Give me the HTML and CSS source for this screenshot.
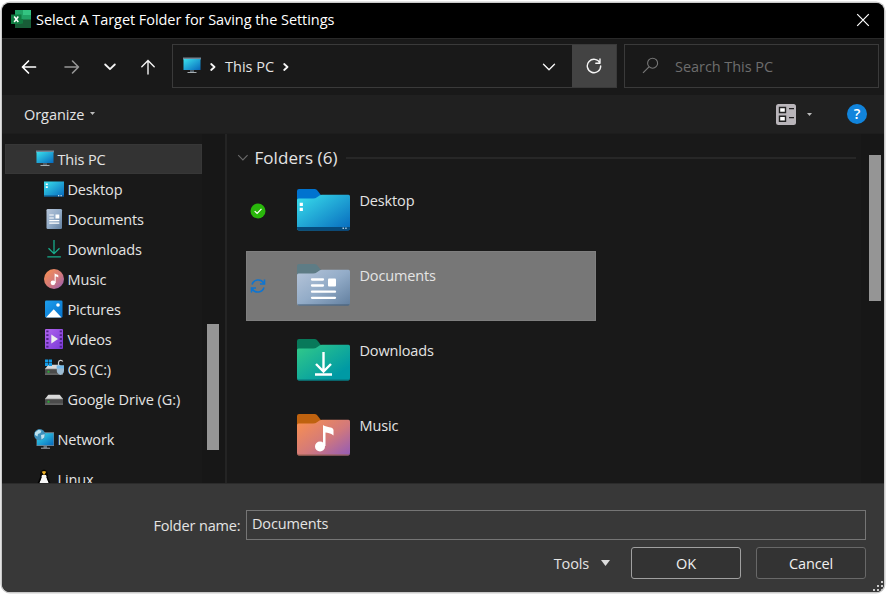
FILE: index.html
```html
<!DOCTYPE html>
<html lang="en">
<head>
<meta charset="utf-8">
<title>Select A Target Folder for Saving the Settings</title>
<link rel="stylesheet" href="styles.css">
</head>
<body>
<svg class="defs" width="0" height="0" aria-hidden="true">
  <defs>
    <linearGradient id="screen" x1="0" y1="0" x2="1" y2="1"><stop offset="0" stop-color="#3ae0ec"/><stop offset="1" stop-color="#0668bd"/></linearGradient>
    <linearGradient id="slate" x1="0" y1="0" x2="1" y2="1"><stop offset="0" stop-color="#b6c5d9"/><stop offset=".5" stop-color="#93acc8"/><stop offset="1" stop-color="#627f9f"/></linearGradient>
    <linearGradient id="green" x1="0" y1="0" x2="1" y2="1"><stop offset="0" stop-color="#33cb88"/><stop offset=".8" stop-color="#0099a4"/></linearGradient>
    <linearGradient id="music" x1="0" y1="0" x2="1" y2="1"><stop offset="0" stop-color="#fb914e"/><stop offset=".55" stop-color="#d2797b"/><stop offset="1" stop-color="#925bb9"/></linearGradient>
    <linearGradient id="violet" x1="0" y1="0" x2="1" y2="1"><stop offset="0" stop-color="#b164ed"/><stop offset="1" stop-color="#7939d8"/></linearGradient>
    <linearGradient id="sky" x1="0" y1="0" x2="1" y2="1"><stop offset="0" stop-color="#1e9eec"/><stop offset="1" stop-color="#0573ce"/></linearGradient>
    <symbol id="pc" viewBox="0 0 18 17"><path d="M0 .5h18v2H0z" fill="#728493"/><path d="M.5 2h17v11H.5z" fill="url(#screen)"/><path d="M7 13.200h4v1.700H7z" fill="#586670"/><path d="M4.500 15h9v1h-9z" fill="#a6adb2"/></symbol>
    <symbol id="drive" viewBox="0 0 18 11"><path d="M3.500 0h11L18 4.500H0z" fill="#d9d9d9"/><path d="M0 4.500h18V10H0z" fill="#4b4b4b"/><path d="M0 4.400h18M0 9.700h18" stroke="#999" stroke-width=".7"/><path d="M2.500 6.200h2v2h-2z" fill="#28a836"/></symbol>
  </defs>
</svg>
<div class="window">
  <header class="titlebar">
    <svg class="excel" width="20" height="18" viewBox="0 0 20 18"><path d="M4 0h16v18H4z" fill="#185c37"/><path d="M4 0h8v9H4z" fill="#21a366"/><path d="M12 0h8v5h-8z" fill="#33c481"/><path d="M12 5h8v4.500h-8z" fill="#21a366"/><path d="M4 9h8v4.500H4z" fill="#107c41"/><path d="M0 4.500h10.500v9.500H0z" fill="#107c41"/><path d="M3.200 6.500 7.300 12M7.300 6.500 3.200 12" stroke="#fff" stroke-width="1.500"/></svg>
    <span class="title">Select A Target Folder for Saving the Settings</span>
    <svg class="close" width="14" height="14" viewBox="0 0 14 14"><path d="m1.200 1.200 11.600 11.600M12.800 1.200 1.200 12.800" stroke="#fff" stroke-width="1.200"/></svg>
  </header>

  <nav class="nav">
    <div class="arrows">
      <svg width="16" height="16" viewBox="0 0 16 16"><path d="M14.500 8H1.500M7.500 2l-6 6 6 6" class="ln bright"/></svg>
      <svg width="16" height="16" viewBox="0 0 16 16"><path d="M1 8h13.500M8.500 2l6 6-6 6" class="ln dim"/></svg>
      <svg width="12" height="16" viewBox="2 0 12 16"><path d="m3.200 5.500 4.800 4.700 4.800-4.700" class="ln thick"/></svg>
      <svg width="16" height="16" viewBox="0 0 16 16"><path d="M8 15V1.500M1.800 7.800 8 1.500l6.200 6.300" class="ln"/></svg>
    </div>
    <div class="address">
      <svg class="apc" width="18" height="17"><use href="#pc"/></svg>
      <svg class="crumb" width="6" height="8" viewBox="0 0 6 8"><path d="m1.200 1 3.300 3-3.300 3" class="ln thick"/></svg>
      <span class="place">This PC</span>
      <svg class="crumb" width="6" height="8" viewBox="0 0 6 8"><path d="m1.200 1 3.300 3-3.300 3" class="ln thick"/></svg>
      <svg class="drop" width="14" height="8" viewBox="0 0 14 8"><path d="m1.500 1.300 5.500 5.500 5.500-5.500" class="ln"/></svg>
      <div class="refresh"><svg width="16" height="16" viewBox="0 0 16 16"><path d="M14 5A6.700 6.700 0 1 0 14.700 8M14 1v4.200H9.800" class="ln"/></svg></div>
    </div>
    <div class="search">
      <svg width="17" height="17" viewBox="0 0 17 17"><circle cx="10.600" cy="6.200" r="5" fill="none" stroke="#777" stroke-width="1.100"/><path d="m7 9.800-6 6" stroke="#777" stroke-width="1.200"/></svg>
      <span>Search This PC</span>
    </div>
  </nav>

  <div class="toolbar">
    <span class="organize">Organize</span>
    <svg class="tri" width="5" height="3" viewBox="0 0 5 3"><path d="M0 0h5L2.500 3z" fill="#bbb"/></svg>
    <svg class="view" width="20" height="21" viewBox="0 0 20 21"><rect width="20" height="21" rx="2.500" fill="#b9b5ba"/><path d="M3.500 3.500h6v5h-6zM3.500 12.300h6v5h-6z" fill="#fff" stroke="#222" stroke-width="1.400"/><path d="M13 4.700h5M13 13.700h5" stroke="#222" stroke-width="1.300"/></svg>
    <svg class="tri" width="5" height="3" viewBox="0 0 5 3"><path d="M0 0h5L2.500 3z" fill="#bbb"/></svg>
    <span class="help">?</span>
  </div>

  <main class="body">
    <aside class="side">
      <ul class="tree">
        <li class="sel"><svg width="18" height="17"><use href="#pc"/></svg><span>This PC</span></li>
        <li class="sub"><svg width="20" height="20" viewBox="0 0 20 20"><path d="M0 2.500h20v15H0z" fill="url(#screen)"/><path d="M0 16.500h20v1H0z" fill="#0a4a80"/><path d="M1.800 4.500h2v1.600h-2zM1.800 7.300h2v1.600h-2zM14 16.300h1.300v1H14zM16.500 16.300h1.300v1h-1.300z" fill="#fff"/></svg><span>Desktop</span></li>
        <li class="sub"><svg width="20" height="20" viewBox="0 0 20 20"><rect x="2.500" width="15.500" height="20" rx="1.300" fill="url(#slate)"/><path d="M5.300 6h4.500M5.300 9h4.500M5.300 11.700h10M5.300 14.200h10" stroke="#fff" stroke-width="1.200"/><path d="M11.500 5.500h3.800v4h-3.800z" fill="#fff"/></svg><span>Documents</span></li>
        <li class="sub"><svg width="20" height="20" viewBox="0 0 20 20"><path d="M10 1v13.500M4.500 9.300 10 14.700l5.500-5.400M3.300 17.800h13.600" fill="none" stroke="#17ac8c" stroke-width="1.300"/></svg><span>Downloads</span></li>
        <li class="sub"><svg width="20" height="20" viewBox="0 0 20 20"><circle cx="10" cy="10" r="10" fill="url(#music)"/><path d="M10.600 13.800V4.200c1 1.300 3.700 1.300 3.700 2v2.300c-1-.8-2.300-.8-2.600-1v6.400z" fill="#fff"/><circle cx="9" cy="13.800" r="2.400" fill="#fff"/></svg><span>Music</span></li>
        <li class="sub"><svg width="20" height="20" viewBox="0 0 20 20"><rect x="1" y="1.500" width="17.500" height="17" rx="1.300" fill="url(#sky)"/><path d="m2 18.500 7.700-8.200 7.800 8.200z" fill="#fff"/><circle cx="14" cy="6" r="1.800" fill="#fff"/></svg><span>Pictures</span></li>
        <li class="sub"><svg width="20" height="20" viewBox="0 0 20 20"><rect x="1" width="18" height="20" rx="1" fill="url(#violet)"/><path d="M3.400 1.500v18M16.800 1.500v18" stroke="#4d2185" stroke-width="2.200" stroke-dasharray="1.800 2"/><path d="m7.300 5.500 6.700 4.500-6.700 4.500z" fill="#eee"/></svg><span>Videos</span></li>
        <li class="sub"><svg width="20" height="20" viewBox="0 0 20 20"><use href="#drive" x="1" y="5.500" width="18" height="11"/><path d="M1 .5h3.200v3H1zM4.800.5H8v3H4.800zM1 4.100h3.200v3H1zM4.800 4.100H8v3H4.800z" fill="#149be6"/><path d="M14.500 7V3.300a2.300 2.300 0 0 1 4.300-.8" fill="none" stroke="#ccc" stroke-width="1.200"/><path d="M12.800 6.500H20v5.300q0 3-3.500 4.200-3.700-1.200-3.700-4.200z" fill="#9cbcd4"/><path d="M12.800 6.500H20v3h-7.200z" fill="#75bbea"/></svg><span>OS (C:)</span></li>
        <li class="sub"><svg width="20" height="20" viewBox="0 0 20 20"><use href="#drive" x="1" y="5.500" width="18" height="11"/></svg><span class="wide">Google Drive (G:)</span></li>
        <li class="net"><svg width="20" height="20" viewBox="0 0 20 20"><path d="M2.500 3.200H20V17H2.500z" fill="#728493"/><path d="M3 4.200h16.500v12H3z" fill="url(#screen)"/><path d="M9.500 17h3.500v2H9.500z" fill="#65717a"/><path d="M7 18.700h9v1H7z" fill="#a6adb2"/><circle cx="5.700" cy="5.700" r="5.600" fill="#3e91bc"/><path d="M1 3.500 4.500.8l3 1-1 2.200-2.500 1-.5 2.500L1 6zM7 6l3.700-.8-.5 3.300-2.700 2z" fill="#bce1ee"/></svg><span>Network</span></li>
        <li class="linux"><svg width="20" height="20" viewBox="0 0 20 20"><ellipse cx="10" cy="6.500" rx="4" ry="6" fill="#050505"/><path d="M8 6h4l1.200 4 2 5-2.500 4H7.200L5 15l2-5z" fill="#f7f7f7"/><path d="M7 8 4 15M13 8l3 7" stroke="#000" stroke-width="1.500"/><path d="m7.700 2.800 2.300-.8 2.300.8L10 6.300z" fill="#e9ae27"/></svg><span>Linux</span></li>
      </ul>
      <div class="track"><div class="thumb side-thumb"></div></div>
    </aside>
    <section class="files">
      <h2 class="group"><svg width="12" height="8" viewBox="0 0 12 8"><path d="m1.200 1.200 4.700 4.800 4.700-4.800" fill="none" stroke="#6a6a6a" stroke-width="1.100"/></svg><span>Folders (6)</span><i></i></h2>
      <div class="item">
        <svg class="state" width="16" height="16" viewBox="0 0 16 16"><circle cx="8" cy="8" r="7.500" fill="#29b70b"/><path d="m4.700 8.100 2.400 2.300 4.400-4.500" fill="none" stroke="#fff" stroke-width="1.300"/></svg>
        <svg class="folder" width="53" height="42" viewBox="0 0 53 42"><path d="M0 2q0-2 2-2h15.500q1.500 0 2.500 1l3.500 4.500v8H0z" fill="#0073cf"/><path d="M0 11q0-1.500 1.500-1.500H16q2.500 0 4-1.200L22.500 6.500q1-.8 2.500-.8h26.500Q53 5.700 53 7.500V39q0 2.500-2 2.500H2Q0 41.500 0 39z" fill="url(#screen)"/><path d="M0 38h53v1q0 2.500-2 2.500H2Q0 41.500 0 39z" fill="#064b7c"/><path d="M2.700 13.700h3.200v3.200H2.700zM2.700 18.700h3.200v3.200H2.700z" fill="#fff"/><path d="M45.500 38.500H47V40h-1.500zM48.200 38.500h1.500V40h-1.500z" fill="#aac8df"/></svg>
        <span>Desktop</span>
      </div>
      <div class="item chosen">
        <svg class="state" width="16" height="16" viewBox="0 0 16 16"><path d="M2 6.500A6.500 6.500 0 0 1 13.700 5M14.500 1.500V6H10M14 9.500A6.500 6.500 0 0 1 2.300 11M1.500 14.500V10H6" fill="none" stroke="#0f75d0" stroke-width="1.600"/></svg>
        <svg class="folder" width="53" height="42" viewBox="0 0 53 42"><path d="M0 2q0-2 2-2h15.500q1.500 0 2.500 1l3.500 4.500v8H0z" fill="#5e7c85"/><path d="M0 11q0-1.500 1.500-1.500H16q2.500 0 4-1.200L22.500 6.500q1-.8 2.500-.8h26.500Q53 5.700 53 7.500V39q0 2.500-2 2.500H2Q0 41.500 0 39z" fill="url(#slate)"/><path d="M.5 40.500q.5 1 1.500 1h49q1 0 1.500-1z" fill="#435b73"/><path d="M15 15.500h11M15 21.500h11M15 27.700h23M15 33.800h23" stroke="#fff" stroke-width="2.300" stroke-linecap="round"/><rect x="31" y="14.500" width="8" height="8" rx="1" fill="#fff"/></svg>
        <span>Documents</span>
      </div>
      <div class="item">
        <svg class="state" width="16" height="16"></svg>
        <svg class="folder" width="53" height="42" viewBox="0 0 53 42"><path d="M0 2q0-2 2-2h15.500q1.500 0 2.500 1l3.500 4.500v8H0z" fill="#08795a"/><path d="M0 11q0-1.500 1.500-1.500H16q2.500 0 4-1.200L22.500 6.500q1-.8 2.500-.8h26.500Q53 5.700 53 7.500V39q0 2.500-2 2.500H2Q0 41.500 0 39z" fill="url(#green)"/><path d="M.5 40.500q.5 1 1.500 1h49q1 0 1.500-1z" fill="#067078"/><path d="M26.500 13v19M19 25l7.500 7.500L34 25M18 35.500h17" fill="none" stroke="#fff" stroke-width="2.400"/></svg>
        <span>Downloads</span>
      </div>
      <div class="item">
        <svg class="state" width="16" height="16"></svg>
        <svg class="folder" width="53" height="42" viewBox="0 0 53 42"><path d="M0 2q0-2 2-2h15.500q1.500 0 2.500 1l3.500 4.500v8H0z" fill="#bf620f"/><path d="M0 11q0-1.500 1.500-1.500H16q2.500 0 4-1.200L22.500 6.500q1-.8 2.500-.8h26.500Q53 5.700 53 7.500V39q0 2.500-2 2.500H2Q0 41.500 0 39z" fill="url(#music)"/><path d="M.5 40.500q.5 1 1.500 1h49q1 0 1.500-1z" fill="#96604d"/><path d="M26 32V11c2.500 2.500 10.500 1.500 10.500 5v5.500c-2.700-2.500-6-2.500-8-3V32z" fill="#fff"/><circle cx="23" cy="32.500" r="5" fill="#fff"/></svg>
        <span>Music</span>
      </div>
    </section>
    <div class="track main-track"><div class="thumb main-thumb"></div></div>
  </main>

  <footer class="footer">
    <div class="namerow"><label>Folder name:</label><div class="field">Documents</div></div>
    <div class="actions">
      <span class="tools">Tools</span><svg width="9" height="6" viewBox="0 0 9 6"><path d="M0 0h9L4.500 6z" fill="#ddd"/></svg>
      <button class="ok">OK</button><button>Cancel</button>
    </div>
    <svg class="grip" width="11" height="11" viewBox="0 0 11 11"><path d="M8 0h2v2H8zM4 4h2v2H4zM8 4h2v2H8zM0 8h2v2H0zM4 8h2v2H4zM8 8h2v2H8z" fill="#c8c8c8"/></svg>
  </footer>
</div>
</body>
</html>
```
FILE: styles.css
```css
* { box-sizing: border-box; }
html, body { margin: 0; background: #fff; }
body {
  width: 886px; height: 594px; padding: 3px 2px 2px;
  overflow: hidden;
  font: 14.5px/20px "Open Sans", "Noto Sans", sans-serif;
  letter-spacing: -.15px;
  color: #e4e4e4;
}
svg { display: block; flex: none; }
.defs { position: absolute; }
span, label { white-space: nowrap; }
.window {
  width: 882px; height: 589px;
  border-radius: 8px;
  overflow: hidden;
  background: #191919;
  box-shadow: 0 0 0 1.5px #c9c9c9;
}
.titlebar { display: flex; height: 35px; padding: 0 14px 0 9px; align-items: center; background: #000; color: #fff; }
.excel { margin-top: -3px; }
.title { margin: -1px auto 0 5px; letter-spacing: -.05px; }
.close { margin-top: -1px; }

.nav { display: flex; height: 57px; padding: 5px 5px 0 19px; border-top: 1px solid #292929; }
.arrows { display: flex; width: 151px; height: 46px; align-items: center; gap: 24px; }
.arrows svg:nth-child(1) { margin-right: 3px; }
.arrows svg:nth-child(3) { margin-right: 0; }
.ln { fill: none; stroke: #f4f4f4; stroke-width: 1.4; stroke-linecap: round; stroke-linejoin: round; }
.bright { stroke: #fff; stroke-width: 1.7; }
.dim { stroke: #969696; stroke-width: 1.6; }
.thick { stroke-width: 1.8; }
.address { display: flex; width: 445px; height: 44px; border: 1px solid #3a3a3a; align-items: center; padding-left: 10px; }
.apc { margin-top: -1px; margin-right: 9px; }
.crumb { margin-top: 1px; }
.place { margin: 1px 9px 0; letter-spacing: 0; }
.drop { margin: 1px 16px 0 auto; }
.refresh { display: flex; width: 44px; height: 42px; align-items: center; justify-content: center; background: #434343; }
.search { display: flex; width: 255px; height: 44px; margin-left: 7px; padding-left: 17px; gap: 16px; align-items: center; border: 1px solid #3a3a3a; color: #6d6d6d; letter-spacing: -.05px; }
.search svg { margin-top: -1px; }
.search span { margin-top: 2px; }

.toolbar { display: flex; height: 38px; padding: 0 17px 0 22px; align-items: center; background: #202020; }
.organize { margin-top: 1px; letter-spacing: -.05px; }
.toolbar .tri { margin-left: 6px; margin-top: -2px; }
.toolbar .view { margin-left: auto; }
.toolbar .view + .tri { margin-left: 11px; margin-right: 35px; margin-top: 0; }
.help { width: 20px; height: 20px; border-radius: 50%; background: #1184dc; color: #fff; text-align: center; font-weight: 600; }

.body { display: flex; height: 350px; overflow: hidden; border-top: 1px solid #1d1d1d; }
.side { display: flex; width: 225px; height: 349px; border-right: 2px solid #242424; }
.tree { width: 200px; margin: 0; padding: 10px 0 0 3px; list-style: none; }
.tree li { display: flex; height: 30px; align-items: center; padding-left: 31px; gap: 4px; }
.tree svg { margin-top: -1px; }
.tree span { margin-top: 2px; margin-left: -.5px; }
.tree .wide { letter-spacing: -.05px; }
.tree li.sel { background: #333; border: 1px solid #373737; padding-left: 30px; }
.tree li.sub { padding-left: 39px; }
.tree li.net { margin-top: 10px; padding-left: 29px; }
.tree li.linux { margin-top: 10px; padding-left: 29px; }
.tree li.linux svg { margin-top: 0; }
.track { width: 23px; padding: 190px 0 0 5px; background: #171717; }
.thumb { width: 12px; background: #959595; }
.side-thumb { height: 126px; }
.files { width: 635px; padding-left: 10px; }
.group { display: flex; align-items: center; height: 26px; margin: 11px 0 5px; font-size: 17px; font-weight: 400; letter-spacing: .05px; }
.group span { margin: 0 8px 0 5.5px; }
.group i { width: 510px; height: 2px; background: #272727; }
.item { display: flex; width: 350px; height: 70px; margin: 0 0 5px 9px; padding-left: 4px; }
.chosen { background: #777; border: 1px solid #7f7f7f; padding-left: 3px; }
.state { margin-top: 27px; }
.folder { margin: 13px 0 0 31px; }
.item span { margin: 15px 0 0 9.5px; }
.chosen .state { margin-top: 26px; }
.chosen .folder { margin-top: 12px; }
.chosen span { margin-top: 14px; }
.main-track { padding: 21px 0 0 8px; }
.main-thumb { height: 146px; }

.footer { position: relative; height: 109px; background: #383838; padding: 26px 18px 0 0; border-top: 1px solid #2b2b2b; }
.namerow { display: flex; justify-content: flex-end; }
.namerow label { margin: 6px 5.5px 0 0; }
.field { width: 620px; height: 30px; padding: 3px 5px; border: 1px solid #757575; }
.actions { display: flex; justify-content: flex-end; align-items: center; margin-top: 7px; height: 32px; }
.tools { margin: 2px 12px 0 0; }
button { width: 110px; height: 32px; margin: 0 0 0 15px; padding: 1px 0 0; font: inherit; letter-spacing: inherit; color: #f0f0f0; background: #333; border: 1px solid #686868; border-radius: 3px; }
button.ok { margin-left: 21px; border-color: #a0a0a0; }
.grip { position: absolute; right: 0; bottom: 0; }
```
